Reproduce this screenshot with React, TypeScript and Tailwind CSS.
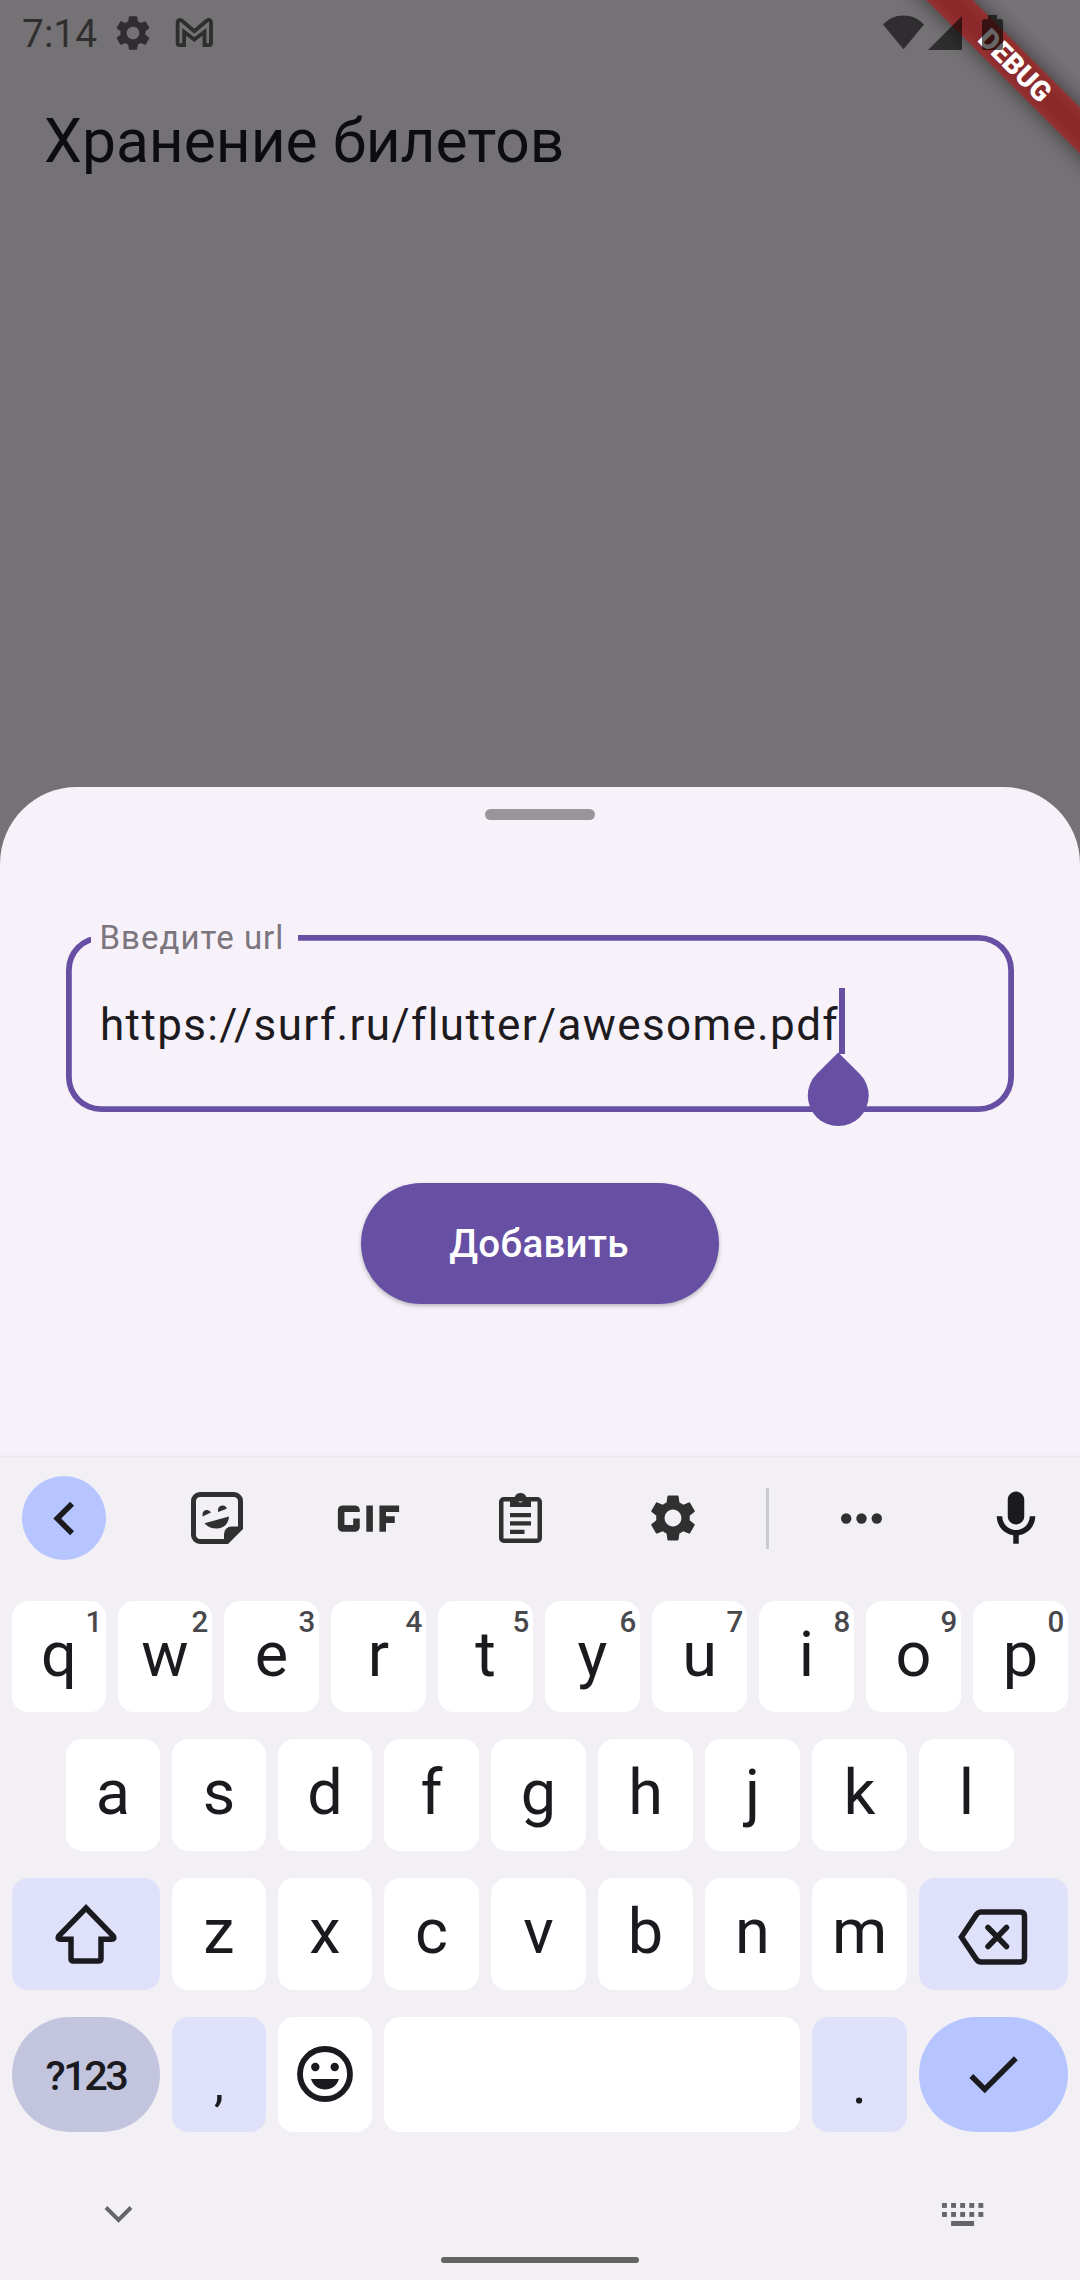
import React from 'react';
import { MdCheck, MdChevronLeft, MdGif, MdSettings } from 'react-icons/md';

type LetterKey = { label: string; hint?: string };

const topRow: LetterKey[] = [
  { label: 'q', hint: '1' },
  { label: 'w', hint: '2' },
  { label: 'e', hint: '3' },
  { label: 'r', hint: '4' },
  { label: 't', hint: '5' },
  { label: 'y', hint: '6' },
  { label: 'u', hint: '7' },
  { label: 'i', hint: '8' },
  { label: 'o', hint: '9' },
  { label: 'p', hint: '0' },
];
const homeRow: LetterKey[] = 'asdfghjkl'.split('').map((label) => ({ label }));
const bottomRow: LetterKey[] = 'zxcvbnm'.split('').map((label) => ({ label }));

function Key({ label, hint, narrow }: LetterKey & { narrow: boolean }) {
  return (
    <button
      className={`relative flex h-full shrink-0 items-center justify-center rounded-[16px] bg-white pb-[5px] text-[63px] leading-none text-[#1b1b1f] ${
        narrow ? 'w-[94px]' : 'w-[95px]'
      }`}
    >
      {label}
      {hint && (
        <span className="absolute right-[2px] top-[5px] w-[20px] text-center text-[29.500px] font-medium leading-[33px] text-[#49494d]">
          {hint}
        </span>
      )}
    </button>
  );
}

function GmailIcon() {
  return (
    <svg width="40" height="32" viewBox="0 0 40 32" fill="none">
      <path
        d="M9.100 28.100H4.600Q2.600 28.100 2.600 26V6Q2.600 2.900 5 2.900Q6 2.900 7 3.700L19.300 14.200 31.600 3.700Q32.600 2.900 33.600 2.900Q36 2.900 36 6V26Q36 28.100 34 28.100H29.500V14.800L19.300 22.600 9.100 14.800z"
        stroke="#2f2e2f"
        strokeWidth="3.800"
      />
    </svg>
  );
}

function StatusBar() {
  return (
    <div className="relative z-20 flex h-[66px] items-start justify-between text-black/60">
      <div className="flex h-[66px] items-center pl-[22px]">
        <span className="w-[90px] pt-[3px] text-[39px] leading-none">7:14</span>
        <MdSettings size={42} />
        <span className="ml-[21px]">
          <GmailIcon />
        </span>
      </div>
      <div className="flex pr-[77px] pt-[15px]">
        <svg width="41" height="35" viewBox="0 0 41 35" fill="currentColor">
          <path d="M20.500 34.300 0 9.500C5.500 3.500 12.500.4 20.500.4S35.500 3.500 41 9.500z" />
        </svg>
        <svg className="ml-[4px]" width="34" height="35" viewBox="0 0 34 35" fill="currentColor">
          <path d="M34 1v34H0z" />
        </svg>
        <svg className="ml-[20px]" width="21" height="36" viewBox="0 0 21 36" fill="currentColor">
          <path d="M6 0h9v4h3.500A2.500 2.500 0 0 1 21 6.500v26a2.500 2.500 0 0 1-2.500 2.500h-16A2.500 2.500 0 0 1 0 32.500v-26A2.500 2.500 0 0 1 2.500 4H6z" />
        </svg>
      </div>
    </div>
  );
}

function DebugBanner() {
  return (
    <div className="absolute right-0 top-0 z-10 h-[240px] w-[240px] overflow-hidden">
      <div className="absolute left-[64.500px] top-[49px] h-[33px] w-[220px] rotate-45">
        <div className="absolute inset-x-[-60px] inset-y-0 bg-black/50 blur-[10.900px]" />
        <div className="absolute inset-x-[-60px] inset-y-0 bg-[rgba(183,28,28,0.627)]" />
        <div className="relative text-center text-[28px] font-black leading-[33px] text-white">DEBUG</div>
      </div>
    </div>
  );
}

function StickerIcon() {
  return (
    <svg width="52" height="52" viewBox="0 0 52 52">
      <path
        d="M36 49.500H9a6.500 6.500 0 0 1-6.500-6.500V9A6.500 6.500 0 0 1 9 2.500h34A6.500 6.500 0 0 1 49.500 9v27z"
        fill="none"
        stroke="#303030"
        strokeWidth="5"
      />
      <path d="M33 51V42a7.500 7.500 0 0 1 7.500-7.500H51V36L36 51z" fill="#303030" />
      <path d="M11.500 24.500v-2.500a4.500 4.500 0 0 1 8.500-1.500zM27 20v-2.500a4.500 4.500 0 0 1 8.800-.8zM13.500 31.200 38 24.500C37.500 31.500 33 36.500 25.500 36.500c-5 0-9-1.600-12-5.300z" fill="#303030" />
    </svg>
  );
}

function ClipboardIcon() {
  return (
    <svg width="43" height="51" viewBox="0 0 43 51">
      <rect x="2.250" y="7.300" width="38.500" height="41.400" rx="2.500" fill="none" stroke="#303030" strokeWidth="4.500" />
      <path
        fillRule="evenodd"
        d="M11 5h4.600a6.400 6.400 0 0 1 11.800 0H32v10H11zM21.500 5a2.700 2.700 0 1 0 0 5.400 2.700 2.700 0 0 0 0-5.400z"
        fill="#303030"
      />
      <path d="M11 21h21v4.300H11zM11 29.200h21v4.300H11zM11 37.700h14.500V42H11z" fill="#303030" />
    </svg>
  );
}

function Toolbar() {
  return (
    <div className="flex h-[122px] items-center pl-[22px] pr-[31px] text-[#303030]">
      <button className="flex h-[84px] w-[84px] items-center justify-center rounded-full bg-[#b6c4ff] text-[#1b1b1f]">
        <MdChevronLeft size={67} />
      </button>
      <span className="ml-[84.500px]">
        <StickerIcon />
      </span>
      <span className="ml-[73.500px]">
        <MdGif size={105} />
      </span>
      <span className="ml-[78px] pb-[1px]">
        <ClipboardIcon />
      </span>
      <span className="ml-[102.500px]">
        <MdSettings size={56} />
      </span>
      <div className="ml-[65.500px] h-[61px] w-[3px] bg-[#cbcad0]" />
      <svg className="ml-[72px]" width="41" height="11" viewBox="0 0 41 11" fill="currentColor">
        <circle cx="5.200" cy="5.500" r="5.200" />
        <circle cx="20.500" cy="5.500" r="5.200" />
        <circle cx="35.800" cy="5.500" r="5.200" />
      </svg>
      <svg className="ml-auto mt-[2px] text-[#1b1b1f]" width="66" height="66" viewBox="0 0 24 24" fill="currentColor">
        <path d="M12 14c1.660 0 3-1.340 3-3V5c0-1.660-1.340-3-3-3S9 3.340 9 5v6c0 1.660 1.340 3 3 3zm5-3c0 2.760-2.240 5-5 5s-5-2.240-5-5H5c0 3.530 2.610 6.430 6 6.920V21h2v-3.080c3.390-.49 6-3.390 6-6.920h-2z" />
      </svg>
    </div>
  );
}

function Keyboard() {
  return (
    <section className="flex h-[823px] flex-col bg-[#f2f0f5] shadow-[0_0_3px_rgba(0,0,0,0.1)]">
      <Toolbar />
      <div className="flex flex-col gap-[27px] px-[12px] pt-[22px]">
        <div className="flex h-[111px] gap-[12px]">
          {topRow.map((k, i) => (
            <Key key={k.label} {...k} narrow={i < 2} />
          ))}
        </div>
        <div className="flex h-[112px] gap-[12px] pl-[54px]">
          {homeRow.map((k, i) => (
            <Key key={k.label} {...k} narrow={i < 3} />
          ))}
        </div>
        <div className="flex h-[112px] gap-[12px]">
          <button className="flex w-[148px] shrink-0 items-center justify-center rounded-[16px] bg-[#dfe0fa]">
            <svg width="64" height="62" viewBox="0 0 64 62" fill="none" stroke="#1b1b1f" strokeWidth="5.500">
              <path d="M32 5 59.300 33.200Q61 36.200 58 36.200H47V55.500Q47 58 44.500 58H19.500Q17 58 17 55.500V36.200H6Q3 36.200 4.700 33.200z" />
            </svg>
          </button>
          {bottomRow.map((k, i) => (
            <Key key={k.label} {...k} narrow={i < 2} />
          ))}
          <button className="flex w-[149px] shrink-0 items-center justify-center rounded-[16px] bg-[#dfe0fa] pr-[2px] pt-[5px]">
            <svg width="70" height="56" viewBox="0 0 70 56" fill="none" stroke="#1b1b1f" strokeWidth="5.500">
              <path d="M3.400 28 18.500 5.500Q20.500 3 23 3H62.500Q66.500 3 66.500 7V49Q66.500 53 62.500 53H23Q20.500 53 18.500 50.500z" />
              <path d="M30 18.500 48.500 37.500M48.500 18.500 30 37.500" strokeLinecap="round" />
            </svg>
          </button>
        </div>
        <div className="flex h-[115px] gap-[12px] text-[#1b1b1f]">
          <button className="flex w-[148px] shrink-0 items-center justify-center rounded-full bg-[#c3c5df] pt-[3px] text-[41.500px] font-medium leading-none tracking-[-2.500px]">
            ?123
          </button>
          <button className="flex w-[94px] shrink-0 items-end justify-center rounded-[16px] bg-[#dfe0fa] pb-[21px] text-[50px] leading-[56px]">
            ,
          </button>
          <button className="flex w-[94px] shrink-0 items-center justify-center rounded-[16px] bg-white pb-[2px]">
            <svg width="56" height="56" viewBox="0 0 56 56" fill="#1b1b1f">
              <circle cx="28" cy="28" r="25" fill="none" stroke="#1b1b1f" strokeWidth="5.800" />
              <circle cx="18.300" cy="21" r="4.200" />
              <circle cx="37.700" cy="21" r="4.200" />
              <path d="M14 33h28C40 39.500 34.500 43.500 28 43.500S16 39.500 14 33z" />
            </svg>
          </button>
          <button className="w-[416px] shrink-0 rounded-[16px] bg-white" aria-label="space" />
          <button className="flex w-[95px] shrink-0 items-end justify-center rounded-[16px] bg-[#dfe0fa] pb-[20px] text-[56px] leading-[56px]">
            .
          </button>
          <button className="flex w-[149px] shrink-0 items-center justify-center rounded-full bg-[#b6c4ff] pb-[1px] pr-[2px]">
            <MdCheck size={66} />
          </button>
        </div>
      </div>
      <div className="flex h-[125px] items-start justify-between pl-[104px] pr-[95px] pt-[71px]">
        <svg className="mt-[3px]" width="29" height="18" viewBox="0 0 29 18" fill="none" stroke="#666" strokeWidth="3.900">
          <path d="M2 1.500 14.500 14 27 1.500" />
        </svg>
        <svg width="43" height="24" viewBox="0 0 43 24" fill="#666">
          {[0, 9.100, 18.200, 27.300, 36.400].map((x) => (
            <React.Fragment key={x}>
              <rect x={x} y="0" width="4.900" height="4.900" />
              <rect x={x} y="9" width="4.900" height="4.900" />
            </React.Fragment>
          ))}
          <rect x="9.100" y="18" width="23" height="5" />
        </svg>
      </div>
      <div className="mx-auto h-[6px] w-[198px] rounded-full bg-[#636363]" />
    </section>
  );
}

function UrlField() {
  return (
    <div className="relative h-[176.500px] rounded-[35px] pl-[34px] shadow-[inset_0_0_0_5.800px_#6750a4]">
      <span className="absolute left-[25px] top-[-15px] w-[207px] bg-[#f7f2fa] pl-[8.500px] text-[33px] leading-[36px] tracking-[1.030px] text-[#7b757d]">
        Введите url
      </span>
      <div className="relative flex w-fit pt-[57px] text-[44px] leading-[66px] tracking-[1.375px] text-[#1d1b20]">
        https://surf.ru/flutter/awesome.pdf
        <span className="absolute -right-[6px] top-[53px] h-[66px] w-[6px] bg-[#6750a4]" />
        <span className="absolute -right-[29.500px] top-[129.500px] h-[60.500px] w-[60.500px] rotate-45 rounded-full rounded-tl-none bg-[#6750a4]" />
      </div>
    </div>
  );
}

export default function App() {
  return (
    <main className="relative flex h-[2280px] w-[1080px] flex-col overflow-hidden bg-[#757275] font-['Roboto',sans-serif]">
      <StatusBar />
      <DebugBanner />
      <header className="flex h-[154px] items-center pb-[2px] pl-[44px] text-[60.500px] leading-none text-[#0d0c0f]">
        Хранение билетов
      </header>
      <section className="mt-auto flex h-[670px] flex-col items-center rounded-t-[77px] bg-[#f7f2fa] pt-[22px]">
        <div className="h-[11px] w-[110px] rounded-full bg-[#999699]" />
        <div className="mt-[115px] w-[948px]">
          <UrlField />
        </div>
        <button className="mt-[71px] flex h-[121px] w-[358px] items-center justify-center rounded-full bg-[#6750a4] pr-[2px] pt-[2px] text-[38.500px] font-medium leading-none tracking-[0.275px] text-white shadow-[0_2px_4px_rgba(0,0,0,0.26)]">
          Добавить
        </button>
      </section>
      <Keyboard />
    </main>
  );
}
